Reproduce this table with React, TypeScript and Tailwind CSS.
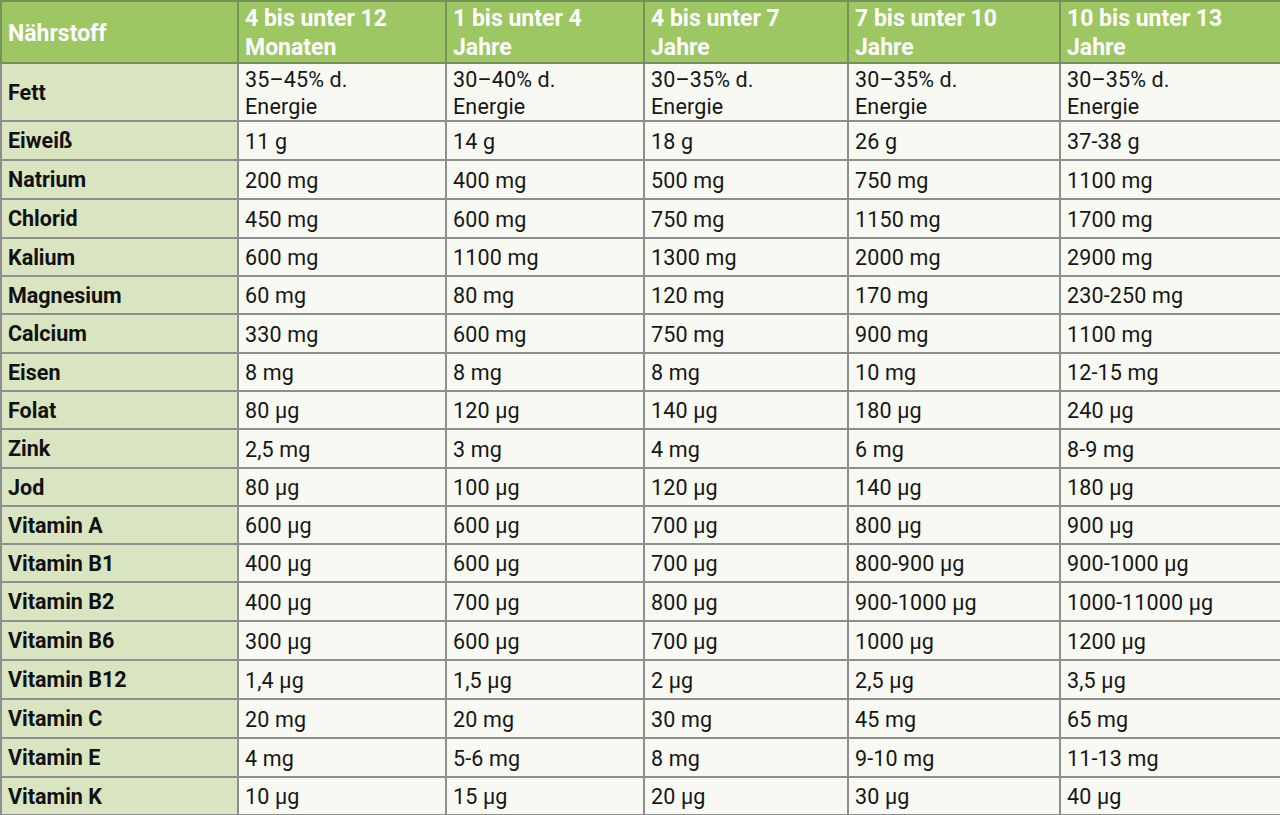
import React from "react";

const headers = [
  "Nährstoff",
  "4 bis unter 12 Monaten",
  "1 bis unter 4 Jahre",
  "4 bis unter 7 Jahre",
  "7 bis unter 10 Jahre",
  "10 bis unter 13 Jahre",
];

const rows: string[][] = [
  ["Fett", "35–45% d.|Energie", "30–40% d.|Energie", "30–35% d.|Energie", "30–35% d.|Energie", "30–35% d.|Energie"],
  ["Eiweiß", "11 g", "14 g", "18 g", "26 g", "37-38 g"],
  ["Natrium", "200 mg", "400 mg", "500 mg", "750 mg", "1100 mg"],
  ["Chlorid", "450 mg", "600 mg", "750 mg", "1150 mg", "1700 mg"],
  ["Kalium", "600 mg", "1100 mg", "1300 mg", "2000 mg", "2900 mg"],
  ["Magnesium", "60 mg", "80 mg", "120 mg", "170 mg", "230-250 mg"],
  ["Calcium", "330 mg", "600 mg", "750 mg", "900 mg", "1100 mg"],
  ["Eisen", "8 mg", "8 mg", "8 mg", "10 mg", "12-15 mg"],
  ["Folat", "80 µg", "120 µg", "140 µg", "180 µg", "240 µg"],
  ["Zink", "2,5 mg", "3 mg", "4 mg", "6 mg", "8-9 mg"],
  ["Jod", "80 µg", "100 µg", "120 µg", "140 µg", "180 µg"],
  ["Vitamin A", "600 µg", "600 µg", "700 µg", "800 µg", "900 µg"],
  ["Vitamin B1", "400 µg", "600 µg", "700 µg", "800-900 µg", "900-1000 µg"],
  ["Vitamin B2", "400 µg", "700 µg", "800 µg", "900-1000 µg", "1000-11000 µg"],
  ["Vitamin B6", "300 µg", "600 µg", "700 µg", "1000 µg", "1200 µg"],
  ["Vitamin B12", "1,4 µg", "1,5 µg", "2 µg", "2,5 µg", "3,5 µg"],
  ["Vitamin C", "20 mg", "20 mg", "30 mg", "45 mg", "65 mg"],
  ["Vitamin E", "4 mg", "5-6 mg", "8 mg", "9-10 mg", "11-13 mg"],
  ["Vitamin K", "10 µg", "15 µg", "20 µg", "30 µg", "40 µg"],
];

const rowH = [
  "h-[58px]", "h-[39px]", "h-[39px]", "h-[39px]", "h-[38px]", "h-[38px]", "h-[39px]", "h-[38px]",
  "h-[38px]", "h-[39px]", "h-[38px]", "h-[38px]", "h-[38px]", "h-[39px]", "h-[39px]", "h-[39px]",
  "h-[39px]", "h-[39px]", "h-[38px]",
];

function Cell({ text }: { text: string }) {
  const parts = text.split("|");
  return (
    <>
      {parts.map((p, i) => (
        <React.Fragment key={i}>
          {i > 0 && <br />}
          {p}
        </React.Fragment>
      ))}
    </>
  );
}

export default function App() {
  return (
    <div className="w-[1280px] h-[815px] overflow-hidden bg-white font-['Roboto',_'Liberation_Sans',_sans-serif]">
      <table className="w-[1280px] table-fixed border-collapse border-l-2 border-t border-r-2 border-b-2 border-l-[#6e6e6e] border-t-[#5c5c5c] border-r-[#6e6e6e] border-b-[#5c5c5c]">
        <colgroup>
          <col className="w-[237px]" />
          <col className="w-[208px]" />
          <col className="w-[198px]" />
          <col className="w-[204px]" />
          <col className="w-[212px]" />
          <col className="w-[221px]" />
        </colgroup>
        <thead>
          <tr className="h-[62px] bg-[#9cc763]">
            {headers.map((h, i) => (
              <th
                key={i}
                className="border-2 border-[#76915a] px-[6px] pt-[2px] text-left align-middle text-[23px] font-bold leading-[29px] text-white"
              >
                {h}
              </th>
            ))}
          </tr>
        </thead>
        <tbody>
          {rows.map((r, ri) => (
            <tr key={ri} className={rowH[ri]}>
              {r.map((c, ci) => (
                <td
                  key={ci}
                  className={
                    ci === 0
                      ? "border-2 border-[#8e8e8e] bg-[#d9e5c0] px-[6px] align-middle text-[21.5px] font-bold leading-[27px] text-[#111111]"
                      : "border-2 border-[#8e8e8e] bg-[#f7f9f2] px-[6px] pt-[1px] align-middle text-[21.5px] leading-[27px] text-[#161616] tracking-[0.15px]"
                  }
                >
                  <Cell text={c} />
                </td>
              ))}
            </tr>
          ))}
        </tbody>
      </table>
    </div>
  );
}
